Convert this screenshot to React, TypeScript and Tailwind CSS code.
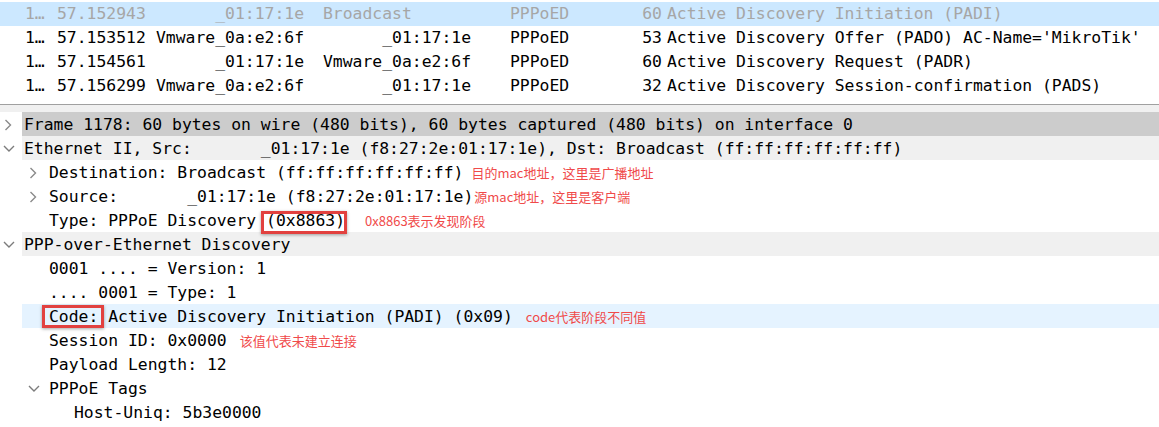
import React from "react";

const mono = "font-['DejaVu_Sans_Mono','Liberation_Mono',monospace]";

function Chevron({ open }: { open: boolean }) {
  return (
    <svg width="14" height="14" viewBox="0 0 14 14" className="shrink-0">
      {open ? (
        <path d="M1 4 L6 9 L11 4" fill="none" stroke="#7c7c7c" strokeWidth="1.4" />
      ) : (
        <path d="M2.5 2 L7.5 7 L2.5 12" fill="none" stroke="#8a8a8a" strokeWidth="1.4" />
      )}
    </svg>
  );
}

function Note({ children, ml }: { children: React.ReactNode; ml: string }) {
  return (
    <span
      className={`${ml} font-['Noto_Sans_CJK_SC',sans-serif] text-[13px] leading-6 text-[#f04a4a] whitespace-nowrap`}
    >
      {children}
    </span>
  );
}

function TreeRow({
  level,
  chev,
  bg,
  children,
}: {
  level: number;
  chev?: "open" | "closed";
  bg?: string;
  children: React.ReactNode;
}) {
  const pad = ["pl-[3px]", "pl-[28px]", "pl-[53px]"][level];
  return (
    <div className={`flex h-6 items-center ${pad} ${bg ?? ""}`}>
      <div className="w-[21px] shrink-0 flex items-center pt-[1px]">
        {chev ? <Chevron open={chev === "open"} /> : null}
      </div>
      <div className="flex items-center whitespace-pre leading-6 text-black translate-y-[1px]">{children}</div>
    </div>
  );
}

function Boxed({
  children,
  cls,
}: {
  children: React.ReactNode;
  cls: string;
}) {
  return (
    <span className="relative inline-block leading-6">
      {children}
      <span
        className={`absolute ${cls} border-[3px] border-[#e2413f] shadow-[0_1px_3px_rgba(0,0,0,0.35)] pointer-events-none`}
      />
    </span>
  );
}

const packets = [
  {
    no: "1…",
    time: "57.152943",
    src: "      _01:17:1e",
    dst: "Broadcast",
    proto: "PPPoED",
    len: "60",
    info: "Active Discovery Initiation (PADI)",
    sel: true,
  },
  {
    no: "1…",
    time: "57.153512",
    src: "Vmware_0a:e2:6f",
    dst: "      _01:17:1e",
    proto: "PPPoED",
    len: "53",
    info: "Active Discovery Offer (PADO) AC-Name='MikroTik'",
  },
  {
    no: "1…",
    time: "57.154561",
    src: "      _01:17:1e",
    dst: "Vmware_0a:e2:6f",
    proto: "PPPoED",
    len: "60",
    info: "Active Discovery Request (PADR)",
  },
  {
    no: "1…",
    time: "57.156299",
    src: "Vmware_0a:e2:6f",
    dst: "      _01:17:1e",
    proto: "PPPoED",
    len: "32",
    info: "Active Discovery Session-confirmation (PADS)",
  },
];

export default function App() {
  const tdgray = "bg-[linear-gradient(to_right,transparent_22px,#f0f0f0_22px)]";
  return (
    <div className={`w-[1159px] h-[427px] overflow-hidden bg-white ${mono} text-[16.4px]`}>
      <div className="h-[104px] pt-[2px]">
        {packets.map((p, i) => (
          <div
            key={i}
            className={`flex h-6 items-center whitespace-pre leading-6 ${
              p.sel ? "bg-[#cce8ff] text-[#a6a6a6]" : "text-black"
            }`}
          >
            <div className="w-[57px] pl-[25px] shrink-0">{p.no}</div>
            <div className="w-[99px] shrink-0">{p.time}</div>
            <div className="w-[167px] shrink-0">{p.src}</div>
            <div className="w-[187px] shrink-0">{p.dst}</div>
            <div className="w-[132px] shrink-0">{p.proto}</div>
            <div className="w-[20px] shrink-0 text-right">{p.len}</div>
            <div className="pl-[5px]">{p.info}</div>
          </div>
        ))}
      </div>
      <div className="h-px bg-[#a0a0a0]" />
      <div className="h-[7px] bg-[#f0f0f0]" />
      <div>
        <TreeRow level={0} chev="closed" bg="bg-[linear-gradient(to_right,transparent_22px,#cccccc_22px)]">
          Frame 1178: 60 bytes on wire (480 bits), 60 bytes captured (480 bits) on interface 0
        </TreeRow>
        <TreeRow level={0} chev="open" bg={tdgray}>
          {"Ethernet II, Src:       _01:17:1e (f8:27:2e:01:17:1e), Dst: Broadcast (ff:ff:ff:ff:ff:ff)"}
        </TreeRow>
        <TreeRow level={1} chev="closed">
          <span>Destination: Broadcast (ff:ff:ff:ff:ff:ff)</span>
          <Note ml="ml-[8px]">目的mac地址，这里是广播地址</Note>
        </TreeRow>
        <TreeRow level={1} chev="closed">
          <span>{"Source:       _01:17:1e (f8:27:2e:01:17:1e)"}</span>
          <Note ml="ml-[1px]">源mac地址，这里是客户端</Note>
        </TreeRow>
        <TreeRow level={1}>
          <span>{"Type: PPPoE Discovery "}</span>
          <Boxed cls="-left-[5px] -right-[2px] top-[2px] -bottom-[1px]">(0x8863)</Boxed>
          <Note ml="ml-[20px]">0x8863表示发现阶段</Note>
        </TreeRow>
        <TreeRow level={0} chev="open" bg={tdgray}>
          PPP-over-Ethernet Discovery
        </TreeRow>
        <TreeRow level={1}>0001 .... = Version: 1</TreeRow>
        <TreeRow level={1}>.... 0001 = Type: 1</TreeRow>
        <TreeRow level={1} bg="bg-[linear-gradient(to_right,transparent_22px,#e5f3ff_22px)]">
          <Boxed cls="-left-[7px] -right-[6px] top-0 bottom-[1px]">Code:</Boxed>
          <span>{" Active Discovery Initiation (PADI) (0x09)"}</span>
          <Note ml="ml-[13px]">code代表阶段不同值</Note>
        </TreeRow>
        <TreeRow level={1}>
          <span>Session ID: 0x0000</span>
          <Note ml="ml-[13px]">该值代表未建立连接</Note>
        </TreeRow>
        <TreeRow level={1}>Payload Length: 12</TreeRow>
        <TreeRow level={1} chev="open">
          PPPoE Tags
        </TreeRow>
        <TreeRow level={2}>Host-Uniq: 5b3e0000</TreeRow>
      </div>
    </div>
  );
}
